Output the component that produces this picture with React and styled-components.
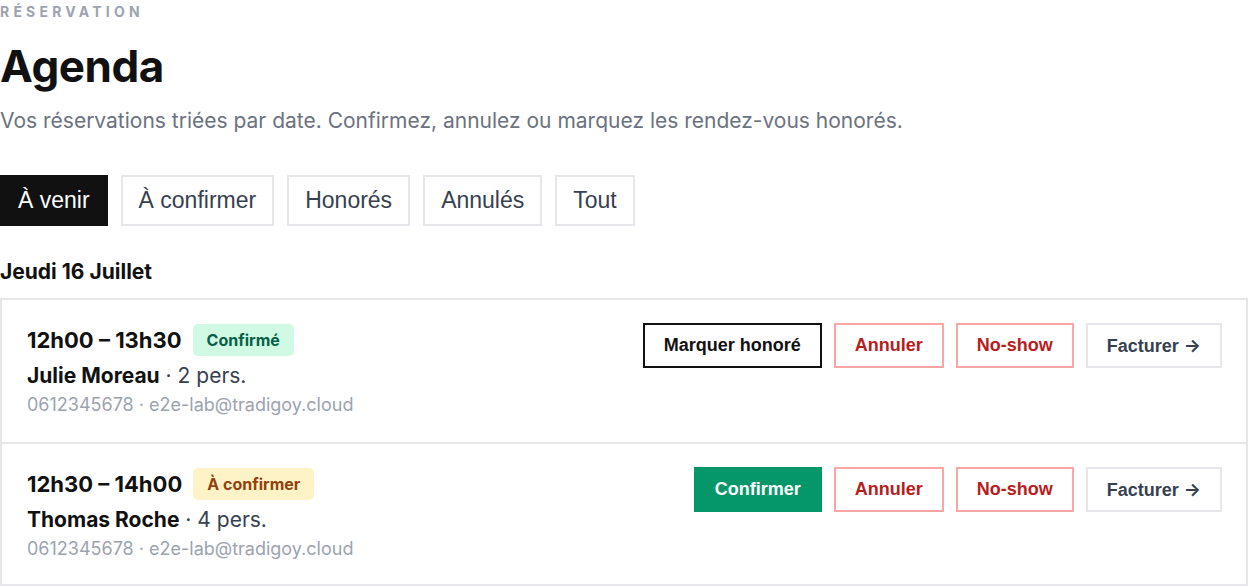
import React from "react"
import styled, { createGlobalStyle } from "styled-components"

const Global = createGlobalStyle`
  body {
    margin: 0;
    background: #fff;
    font-family: Inter, "Noto Sans", sans-serif;
    color: #111;
  }
  * { box-sizing: border-box; }
`

const Page = styled.main`
  width: 1248px;
`

const Eyebrow = styled.div`
  font-size: 14px;
  line-height: 24px;
  font-weight: 700;
  letter-spacing: 4.2px;
  text-transform: uppercase;
  color: #9ca3af;
`

const Title = styled.h1`
  margin: 16px 0 0;
  font-size: 44px;
  line-height: 52px;
  font-weight: 700;
  letter-spacing: -0.01em;
  color: #111;
`

const Lead = styled.p`
  margin: 14px 0 0;
  font-size: 21px;
  line-height: 30px;
  color: #6b7280;
`

const Tabs = styled.nav`
  display: flex;
  gap: 13px;
  margin-top: 39px;
`

const Tab = styled.button`
  height: 51px;
  padding: 0 16px;
  font-family: "Liberation Sans", Arial, sans-serif;
  font-size: 23px;
  border: 2px solid ${p => (p.$active ? "#111" : "#e5e7eb")};
  background: ${p => (p.$active ? "#111" : "#fff")};
  color: ${p => (p.$active ? "#fff" : "#374151")};
  cursor: pointer;
`

const DayTitle = styled.h2`
  margin: 32px 0 0;
  font-size: 21px;
  line-height: 28px;
  font-weight: 700;
`

const List = styled.section`
  margin-top: 12px;
  border: 2px solid #e5e7eb;
`

const Row = styled.article`
  display: flex;
  justify-content: space-between;
  align-items: flex-start;
  height: 142px;
  padding: 24px 24px 0 25px;
  & + & {
    border-top: 2px solid #e5e7eb;
  }
`

const Info = styled.div`
  display: flex;
  flex-direction: column;
`

const TimeLine = styled.div`
  display: flex;
  align-items: center;
  gap: 11px;
`

const Time = styled.span`
  font-size: 22px;
  font-weight: 700;
  line-height: 32px;
`

const Badge = styled.span`
  padding: 0 14px;
  height: 32px;
  display: inline-flex;
  align-items: center;
  border-radius: 5px;
  font-size: 16px;
  font-weight: 700;
  background: ${p => (p.$tone === "ok" ? "#d1fae5" : "#fef3c7")};
  color: ${p => (p.$tone === "ok" ? "#065f46" : "#92400e")};
`

const Guest = styled.div`
  margin-top: 7px;
  font-size: 21px;
  line-height: 26px;
  color: #374151;
  strong {
    color: #111;
    font-weight: 700;
  }
`

const Contact = styled.div`
  margin-top: 4px;
  font-size: 18px;
  line-height: 24px;
  color: #9ca3af;
`

const Actions = styled.div`
  display: flex;
  gap: 12px;
  margin-top: -1px;
`

const tones = {
  dark: { bg: "#fff", border: "#111", color: "#111" },
  go: { bg: "#059669", border: "#059669", color: "#fff" },
  danger: { bg: "#fff", border: "#fca5a5", color: "#b91c1c" },
  plain: { bg: "#fff", border: "#e5e7eb", color: "#374151" },
}

const Action = styled.button`
  height: 45px;
  padding: 0 19px;
  font-family: "Liberation Sans", Arial, sans-serif;
  font-size: 18px;
  font-weight: 700;
  background: ${p => tones[p.$tone].bg};
  border: 2px solid ${p => tones[p.$tone].border};
  color: ${p => tones[p.$tone].color};
  cursor: pointer;
`

const Arrow = styled.span`
  font-family: Inter, sans-serif;
  font-weight: 700;
`

const bookings = [
  {
    time: "12h00 – 13h30",
    status: "Confirmé",
    tone: "ok",
    name: "Julie Moreau",
    people: 2,
    primary: { label: "Marquer honoré", tone: "dark" },
  },
  {
    time: "12h30 – 14h00",
    status: "À confirmer",
    tone: "wait",
    name: "Thomas Roche",
    people: 4,
    primary: { label: "Confirmer", tone: "go" },
  },
]

const tabs = ["À venir", "À confirmer", "Honorés", "Annulés", "Tout"]

export default function App() {
  return (
    <Page>
      <Global />
      <Eyebrow>Réservation</Eyebrow>
      <Title>Agenda</Title>
      <Lead>
        Vos réservations triées par date. Confirmez, annulez ou marquez les
        rendez-vous honorés.
      </Lead>
      <Tabs>
        {tabs.map((t, i) => (
          <Tab key={t} $active={i === 0}>
            {t}
          </Tab>
        ))}
      </Tabs>
      <DayTitle>Jeudi 16 Juillet</DayTitle>
      <List>
        {bookings.map(b => (
          <Row key={b.name}>
            <Info>
              <TimeLine>
                <Time>{b.time}</Time>
                <Badge $tone={b.tone}>{b.status}</Badge>
              </TimeLine>
              <Guest>
                <strong>{b.name}</strong> · {b.people} pers.
              </Guest>
              <Contact>0612345678 · e2e-lab@tradigoy.cloud</Contact>
            </Info>
            <Actions>
              <Action $tone={b.primary.tone}>{b.primary.label}</Action>
              <Action $tone="danger">Annuler</Action>
              <Action $tone="danger">No-show</Action>
              <Action $tone="plain">
                Facturer <Arrow>→</Arrow>
              </Action>
            </Actions>
          </Row>
        ))}
      </List>
    </Page>
  )
}
